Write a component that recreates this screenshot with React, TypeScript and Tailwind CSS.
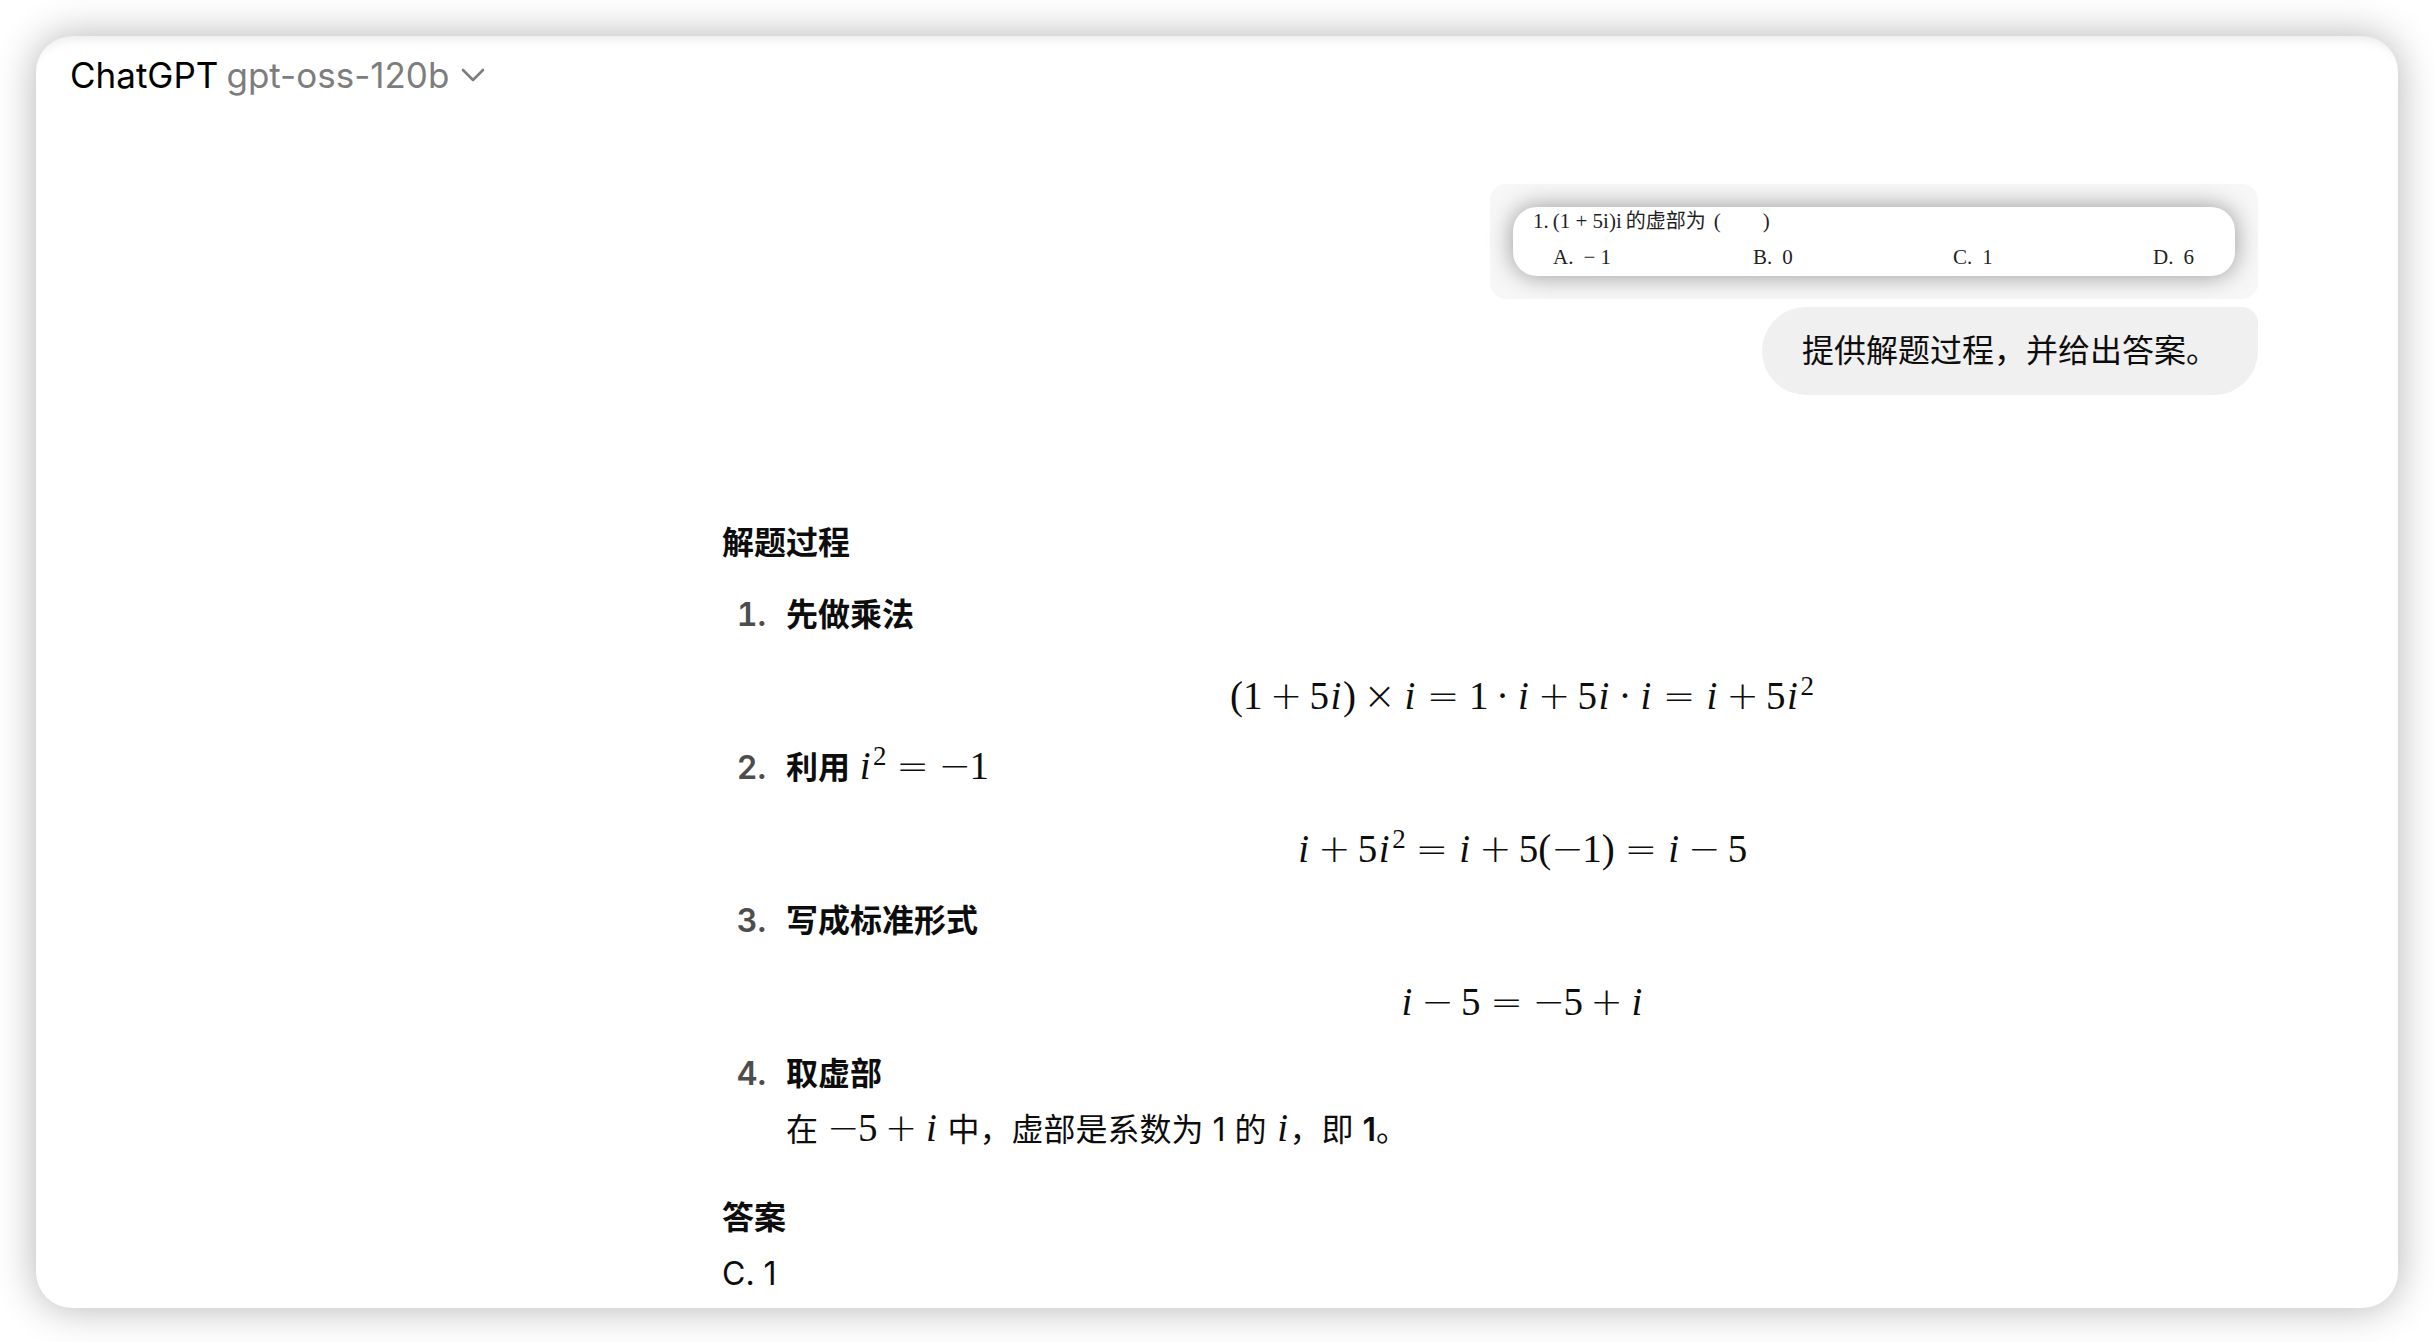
import React from "react";

type Kind = "bin" | "rel" | "dot" | "neg" | "times";

const opStyles: Record<Kind, string> = {
  bin: "inline-block w-[47px] text-center font-['DejaVu_Sans'] font-extralight",
  times: "inline-block w-[47px] text-center font-['DejaVu_Sans'] font-extralight",
  rel: "inline-block w-[52px] text-center font-['DejaVu_Sans'] font-extralight",
  neg: "inline-block w-[31px] text-center font-['DejaVu_Sans'] font-extralight",
  dot: "inline-block w-[28px] text-center",
};

function Op({ kind, children }: { kind: Kind; children: string }) {
  return <span className={opStyles[kind]}>{children}</span>;
}

const I = () => <i className="inline-block w-[14px] text-center">i</i>;
const Squared = () => (
  <>
    <I />
    <sup className="-top-[14px] ml-px align-baseline text-[27px] leading-none">2</sup>
  </>
);

function MathText({ children }: { children: React.ReactNode }) {
  return (
    <span className="whitespace-nowrap font-['Liberation_Serif',serif] text-[39px] leading-none font-normal">
      {children}
    </span>
  );
}

function Formula({ children }: { children: React.ReactNode }) {
  return (
    <div className="flex h-[97px] items-center justify-center pt-2">
      <MathText>{children}</MathText>
    </div>
  );
}

function Step({ n, title, children }: { n: number; title: React.ReactNode; children: React.ReactNode }) {
  return (
    <li className="flex">
      <span className="h-14 w-16 shrink-0 pr-5 text-right font-semibold text-[#4d4d4d] tabular-nums">{n}.</span>
      <div className="min-w-0 flex-1">
        <div className="h-14 font-semibold">{title}</div>
        {children}
      </div>
    </li>
  );
}

const choices = [
  ["A.", "− 1"],
  ["B.", "0"],
  ["C.", "1"],
  ["D.", "6"],
];

export default function App() {
  return (
    <div className="min-h-screen bg-white p-9 font-[Inter,'Noto_Sans_CJK_SC',sans-serif] text-[32px] leading-[56px] text-[#0d0d0d]">
      <div className="rounded-[36px] bg-white pb-1.5 shadow-[0_0_40px_rgba(0,0,0,0.3),inset_0_14px_12px_-12px_rgba(0,0,0,0.1)]">
        <header className="px-[34px] pt-[11px]">
          <button type="button" className="flex items-center gap-2 text-[35px] text-black">
            <span>ChatGPT</span>
            <span className="text-[#7d7d7d]">gpt-oss-120b</span>
            <svg viewBox="0 0 24 16" className="ml-1 h-4 w-6" fill="none" stroke="#7d7d7d" strokeWidth="2.6" strokeLinecap="round" strokeLinejoin="round" aria-hidden="true">
              <path d="M2 3l10 10L22 3" />
            </svg>
          </button>
        </header>

        <main className="mr-[140px] ml-auto max-w-[1536px] pt-[81px]">
          <section className="flex flex-col items-end gap-2">
            <div className="w-1/2 rounded-2xl bg-[#f7f7f7] p-[23px]">
              <div className="h-[69px] rounded-3xl bg-white pt-0.5 pr-[41px] pl-5 font-['Liberation_Serif','Noto_Sans_CJK_SC',serif] text-[21px] leading-6 text-[#1f1f1f] shadow-[0_0_24px_rgba(0,0,0,0.4)]">
                <p className="flex">
                  <span className="mr-1">1.</span>
                  <span className="mr-1">(1 + 5i)i</span>
                  <span className="text-[20px]">的虚部为</span>
                  <span className="ml-2">(</span>
                  <span className="ml-[42px]">)</span>
                </p>
                <ul className="grid grid-cols-[1fr_1fr_1fr_auto] pt-3 pl-5">
                  {choices.map(([label, value]) => (
                    <li key={label} className="flex gap-2.5">
                      <span>{label}</span>
                      <span>{value}</span>
                    </li>
                  ))}
                </ul>
              </div>
            </div>
            <p className="rounded-[44px] rounded-tr-2xl bg-[#f0f0f0] px-10 py-4">提供解题过程，并给出答案。</p>
          </section>

          <article className="pt-[120px]">
            <h2 className="font-semibold">解题过程</h2>
            <ol className="pt-4">
              <Step n={1} title="先做乘法">
                <Formula>
                  (1<Op kind="bin">+</Op>5<I />)<Op kind="times">×</Op><I /><Op kind="rel">=</Op>1
                  <Op kind="dot">·</Op><I /><Op kind="bin">+</Op>5<I /><Op kind="dot">·</Op><I />
                  <Op kind="rel">=</Op><I /><Op kind="bin">+</Op>5<Squared />
                </Formula>
              </Step>
              <Step
                n={2}
                title={<>利用 <MathText><Squared /><Op kind="rel">=</Op><Op kind="neg">−</Op>1</MathText></>}
              >
                <Formula>
                  <I /><Op kind="bin">+</Op>5<Squared /><Op kind="rel">=</Op><I /><Op kind="bin">+</Op>5(
                  <Op kind="neg">−</Op>1)<Op kind="rel">=</Op><I /><Op kind="bin">−</Op>5
                </Formula>
              </Step>
              <Step n={3} title="写成标准形式">
                <Formula>
                  <I /><Op kind="bin">−</Op>5<Op kind="rel">=</Op><Op kind="neg">−</Op>5<Op kind="bin">+</Op><I />
                </Formula>
              </Step>
              <Step n={4} title="取虚部">
                <p className="h-14">
                  在 <MathText><Op kind="neg">−</Op>5<Op kind="bin">+</Op><I /></MathText> 中，虚部是系数为 1 的{" "}
                  <MathText><I /></MathText>，即 <strong className="font-semibold">1</strong>。
                </p>
              </Step>
            </ol>
            <h2 className="pt-8 font-semibold">答案</h2>
            <p>C. 1</p>
          </article>
        </main>
      </div>
    </div>
  );
}
